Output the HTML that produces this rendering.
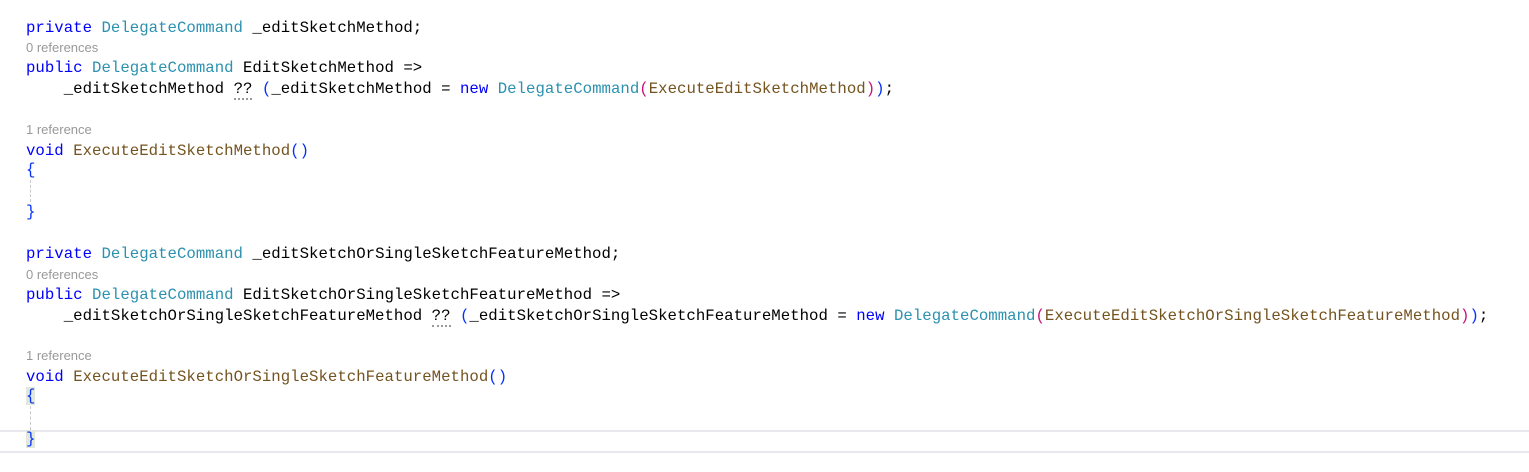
<!DOCTYPE html>
<html><head><meta charset="utf-8"><style>
html,body{margin:0;padding:0;background:#fff;width:1529px;height:472px;overflow:hidden;position:relative}
.l{position:absolute;left:26px;white-space:pre;font-family:"Liberation Mono",monospace;font-size:15.7px;line-height:20px;color:#000;letter-spacing:0.02px}
.c{position:absolute;left:26px;white-space:pre;font-family:"Liberation Sans",sans-serif;font-size:13px;line-height:16px;color:#999}
.k{color:#0000ff}.t{color:#2b91af}.m{color:#74531f}.p1{color:#0431fa}.p2{color:#c8127a}
.hl{position:absolute;left:0;right:0;top:430px;height:19px;border-top:2px solid #e8e8ee;border-bottom:2px solid #e8e8ee}
.bm{background:#e3e8dc}
.g{position:absolute;left:30px;width:0;border-left:1px dashed #c8c8c8}
.d{border-bottom:2px dotted #999}
</style></head><body>
<div class="hl"></div>
<div class="l" style="top:18px"><span class="k">private</span> <span class="t">DelegateCommand</span> _editSketchMethod;</div>
<div class="c" style="top:40px">0 references</div>
<div class="l" style="top:58px"><span class="k">public</span> <span class="t">DelegateCommand</span> EditSketchMethod =&gt;</div>
<div class="l" style="top:79px">    _editSketchMethod <span class="d">??</span> <span class="p1">(</span>_editSketchMethod = <span class="k">new</span> <span class="t">DelegateCommand</span><span class="p2">(</span><span class="m">ExecuteEditSketchMethod</span><span class="p2">)</span><span class="p1">)</span>;</div>
<div class="c" style="top:122px">1 reference</div>
<div class="l" style="top:141px"><span class="k">void</span> <span class="m">ExecuteEditSketchMethod</span><span class="p1">()</span></div>
<div class="l" style="top:160px"><span class="p1">{</span></div>
<div class="g" style="top:180px;height:22px"></div>
<div class="l" style="top:202px"><span class="p1">}</span></div>
<div class="l" style="top:244px"><span class="k">private</span> <span class="t">DelegateCommand</span> _editSketchOrSingleSketchFeatureMethod;</div>
<div class="c" style="top:267px">0 references</div>
<div class="l" style="top:285px"><span class="k">public</span> <span class="t">DelegateCommand</span> EditSketchOrSingleSketchFeatureMethod =&gt;</div>
<div class="l" style="top:306px">    _editSketchOrSingleSketchFeatureMethod <span class="d">??</span> <span class="p1">(</span>_editSketchOrSingleSketchFeatureMethod = <span class="k">new</span> <span class="t">DelegateCommand</span><span class="p2">(</span><span class="m">ExecuteEditSketchOrSingleSketchFeatureMethod</span><span class="p2">)</span><span class="p1">)</span>;</div>
<div class="c" style="top:348px">1 reference</div>
<div class="l" style="top:367px"><span class="k">void</span> <span class="m">ExecuteEditSketchOrSingleSketchFeatureMethod</span><span class="p1">()</span></div>
<div class="l" style="top:386px"><span class="p1 bm">{</span></div>
<div class="g" style="top:406px;height:24px"></div>
<div class="l" style="top:429px"><span class="p1 bm">}</span></div>
</body></html>
